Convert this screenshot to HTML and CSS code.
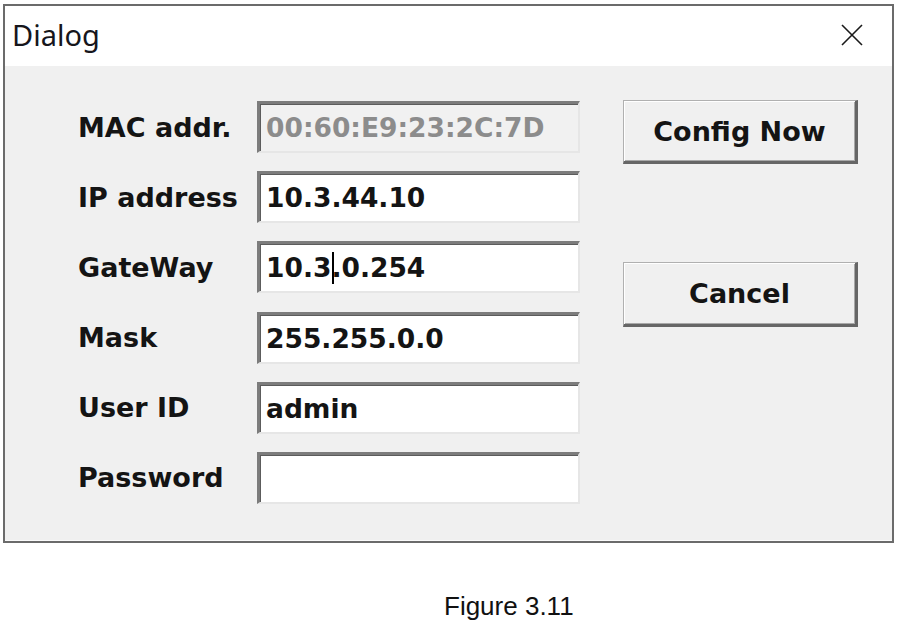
FILE: index.html
```html
<!DOCTYPE html>
<html lang="en">
<head>
<meta charset="utf-8">
<title>Dialog</title>
<link rel="stylesheet" href="styles.css">
</head>
<body>
<div class="window">
  <div class="titlebar">
    <span class="title">Dialog</span>
    <svg class="close" width="22" height="22" viewBox="0 0 22 22" aria-hidden="true">
      <path d="M1 1 L21 21 M21 1 L1 21" stroke="#1a1a1a" stroke-width="1.6" fill="none"/>
    </svg>
  </div>
  <div class="body">
    <div class="content">
      <div class="form">
        <div class="label">MAC addr.</div>
        <div class="field disabled">00:60:E9:23:2C:7D</div>
        <div class="label">IP address</div>
        <div class="field">10.3.44.10</div>
        <div class="label">GateWay</div>
        <div class="field">10.3<span class="caret"></span>.0.254</div>
        <div class="label">Mask</div>
        <div class="field">255.255.0.0</div>
        <div class="label">User ID</div>
        <div class="field">admin</div>
        <div class="label">Password</div>
        <div class="field"></div>
      </div>
      <div class="buttons">
        <div class="button config">Config Now</div>
        <div class="button cancel">Cancel</div>
      </div>
    </div>
  </div>
</div>
<div class="caption">Figure 3.11</div>
</body>
</html>
```
FILE: styles.css
```css
html, body {
  margin: 0;
  padding: 0;
  background: #ffffff;
}

.window {
  box-sizing: border-box;
  margin: 4px 0 0 3px;
  width: 891px;
  height: 539px;
  border: 2px solid #6b6b6b;
  display: flex;
  flex-direction: column;
}

.titlebar {
  height: 60px;
  flex: none;
  background: #ffffff;
  display: flex;
  align-items: center;
  justify-content: space-between;
  padding: 0 29px 0 7px;
}

.title {
  font-family: "Noto Sans", "Open Sans", sans-serif;
  font-size: 29px;
  color: #16161c;
  line-height: 1;
  margin-top: -4px;
}

.close {
  display: block;
  margin-top: -2px;
}

.body {
  flex: 1;
  background: #f0f0f0;
  padding: 35px 0 0 73px;
  border-bottom: 1px solid #fafafa;
}

.content {
  display: flex;
  gap: 43px;
}

.form {
  display: grid;
  grid-template-columns: 179px 323px;
  grid-auto-rows: 52px;
  row-gap: 18.2px;
  align-items: center;
}

.label {
  font-family: "DejaVu Sans", sans-serif;
  font-weight: bold;
  font-size: 27px;
  color: #141414;
  white-space: nowrap;
}

.field {
  box-sizing: border-box;
  height: 52px;
  background: #ffffff;
  border-style: solid;
  border-width: 3px 2px 2px 3px;
  border-color: #7c7c7c #e6e6e6 #e6e6e6 #7c7c7c;
  box-shadow: inset 1px 1px 0 #5c5c5c;
  padding: 0 6px;
  display: flex;
  align-items: center;
  font-family: "DejaVu Sans", sans-serif;
  font-weight: bold;
  font-size: 26.5px;
  color: #141414;
  white-space: nowrap;
}

.field.disabled {
  background: #f1f1f1;
  color: #8c8c8c;
}

.caret {
  display: inline-block;
  width: 2px;
  height: 32px;
  margin-right: -2px;
  background: #000000;
  position: relative;
  left: 1px;
}

.buttons {
  display: flex;
  flex-direction: column;
  width: 235px;
  margin-top: -1px;
}

.button {
  box-sizing: border-box;
  display: flex;
  align-items: center;
  justify-content: center;
  background: #f0f0f0;
  border-style: solid;
  border-width: 1px 3px 3px 1px;
  border-color: #b0b0b0 #666666 #666666 #b0b0b0;
  box-shadow: inset 1px 1px 0 #ffffff, inset -1px -1px 0 #a8a8a8;
  font-family: "DejaVu Sans", sans-serif;
  font-weight: bold;
  font-size: 27px;
  color: #141414;
}

.config {
  height: 64px;
}

.cancel {
  height: 65px;
  margin-top: 98px;
}

.caption {
  margin: 48px 0 0 444px;
  font-family: "Liberation Sans", Arial, sans-serif;
  font-size: 26px;
  color: #111111;
}
```
